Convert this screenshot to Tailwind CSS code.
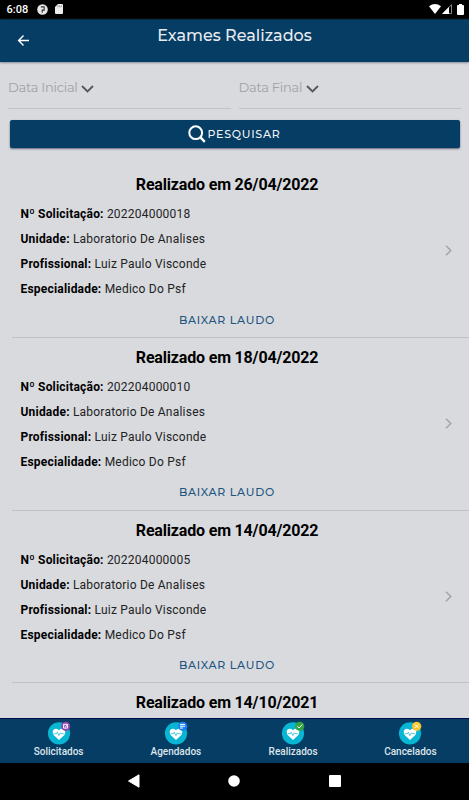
<!DOCTYPE html>
<html lang="pt-BR">
<head>
    <meta charset="UTF-8">
    <meta name="viewport" content="width=device-width, initial-scale=1.0">
    <title>Exames Realizados</title>
    <script src="https://cdn.jsdelivr.net/npm/@tailwindcss/browser@4"></script>
</head>
<body class="bg-black font-['Roboto',sans-serif]">
<div class="flex flex-col w-[469px] h-[800px] overflow-hidden bg-[#d8dade]">
    <!-- Status bar -->
    <div class="flex items-center h-[18.5px] shrink-0 bg-black text-white pl-[6.5px] pr-[5px]">
        <span class="text-[11px] font-medium leading-none w-[30px]">6:08</span>
        <svg class="w-[11px] h-[11px]" viewBox="0 0 11 11"><circle cx="5.5" cy="5.5" r="5.3" fill="#e8e8e8"/><path d="M3.8 2.9h3.4v3.2H5.2v2.7" fill="none" stroke="#333" stroke-width="1.1"/></svg>
        <svg class="w-[8px] h-[10px] ml-[7px]" viewBox="0 0 8 10"><path d="M3 0h4q1 0 1 1v8q0 1-1 1H1q-1 0-1-1V3z" fill="#eee"/><path d="M3 1.5v1.7M4.7 1.5v1.7M6.3 1.5v1.7" stroke="#777" stroke-width=".8"/></svg>
        <div class="flex items-center ml-auto">
            <svg class="w-[12px] h-[10px]" viewBox="0 0 12 10"><path d="M0 2.2Q6-2 12 2.2L6 10z" fill="#fff"/></svg>
            <svg class="w-[10px] h-[10px] ml-px" viewBox="0 0 10 10"><path d="M9.5.7v8.8H.8z" fill="none" stroke="#aaa" stroke-width=".8"/><path d="M0 10L7 3v7z" fill="#fff"/></svg>
            <svg class="w-[7px] h-[11px] ml-[5px]" viewBox="0 0 7 11"><path d="M2 0h3v1h1q1 0 1 1v8q0 1-1 1H1q-1 0-1-1V2q0-1 1-1h1z" fill="#fff"/></svg>
        </div>
    </div>

    <!-- Header -->
    <header class="flex h-[43.5px] shrink-0 bg-[#053d64] text-[#e8ebf0] border-t border-[#042c4b] shadow-[0_1px_2px_#8a8a98]">
        <div class="w-[60px] pl-[17px] pt-[14px]">
            <svg class="w-[13px] h-[13px]" viewBox="0 0 13 13" fill="none" stroke="#fff" stroke-width="1.4"><path d="M12 6.5H1.8M6.5 1.6L1.6 6.5l4.9 4.9"/></svg>
        </div>
        <h1 class="flex-1 pt-[4px] text-center text-[16px] leading-[24px] font-medium font-['Montserrat','Inter',sans-serif]">Exames Realizados</h1>
        <div class="w-[60px]"></div>
    </header>

    <main class="flex-1 min-h-0 overflow-hidden">
        <div class="flex gap-[8px] px-[8px] pt-[8px] font-['Montserrat','Inter',sans-serif] text-[13px] text-[#a0a2a5] font-normal">
            <div class="flex-1 flex items-center h-[38.5px] pb-[2px] border-b border-[#c0c2c6]">
                <span class="w-[73px] whitespace-nowrap tracking-[-0.25px]">Data Inicial</span>
                <svg class="w-[13px] h-[8px] mt-[2px]" viewBox="0 0 13 8" fill="none" stroke="#55575a" stroke-width="1.8"><path d="M1 1l5.5 5.5L12 1"/></svg>
            </div>
            <div class="flex-1 flex items-center h-[38.5px] pb-[2px] border-b border-[#c0c2c6]">
                <span class="w-[67px] whitespace-nowrap tracking-[-0.25px]">Data Final</span>
                <svg class="w-[13px] h-[8px] mt-[2px]" viewBox="0 0 13 8" fill="none" stroke="#55575a" stroke-width="1.8"><path d="M1 1l5.5 5.5L12 1"/></svg>
            </div>
        </div>

        <button class="flex items-center justify-center w-[450px] h-[27.5px] mt-[11.5px] ml-[9.5px] rounded-[2px] bg-[#053d64] text-[#f4f5f7] shadow-[0_1px_2px_#62647a]">
            <svg class="w-[18px] h-[18px]" viewBox="0 0 18 18" fill="none" stroke="#fff" stroke-width="2"><circle cx="7.7" cy="7.7" r="6.4"/><path d="M12.2 12.2l4.6 4.6" stroke-width="2.4"/></svg>
            <span class="ml-px text-[11px] font-medium tracking-[0.75px] font-['Montserrat','Inter',sans-serif]">PESQUISAR</span>
        </button>

        <div id="lista" class="pt-[17.8px]"></div>
    </main>

    <!-- Tabs -->
    <nav id="abas" class="grid grid-cols-4 h-[45px] shrink-0 bg-[#053d64] border-t border-[#00094c]"></nav>

    <!-- Android navigation -->
    <div class="flex items-center justify-center h-[37px] shrink-0 bg-black gap-[88.5px] pb-[1px] pr-[1px]">
        <svg class="w-[12px] h-[14px]" viewBox="0 0 12 14"><path d="M.5 7L11 .8v12.4z" fill="#fff" stroke="#fff" stroke-linejoin="round"/></svg>
        <svg class="w-[12px] h-[12px]" viewBox="0 0 12 12"><circle cx="6" cy="6" r="5.8" fill="#fff"/></svg>
        <svg class="w-[12px] h-[12px]" viewBox="0 0 12 12"><rect width="12" height="12" rx="1" fill="#fff"/></svg>
    </div>
</div>

<script>
    const exames = [
        { data: "26/04/2022", numero: "202204000018" },
        { data: "18/04/2022", numero: "202204000010" },
        { data: "14/04/2022", numero: "202204000005" },
        { data: "14/10/2021" }
    ];

    const abas = [
        { nome: "Solicitados", cor: "#8e44ad", marca: "M16.6 3.3h4v3.8h-4zM17.7 5l.9.9 2-2.3" },
        { nome: "Agendados", cor: "#1683f5", marca: "M16 3.4h5M16 5.2h5M16 7h3" },
        { nome: "Realizados", cor: "#35a344", marca: "M16.4 5.3l1.7 1.7 3.2-3.5" },
        { nome: "Cancelados", cor: "#fbc52d", marca: "M16.8 3.4l3.6 3.6M20.4 3.4l-3.6 3.6" }
    ];

    function linha(rotulo, valor) {
        return `<p class="h-[25px] leading-[25px] text-[12px] tracking-[0.22px] whitespace-nowrap text-[#222]"><b class="font-bold text-black tracking-[0.2px]">${rotulo}:</b> ${valor}</p>`;
    }

    function detalhes(e) {
        return `
            <div class="flex items-center justify-between h-[100px] mt-[5px] pl-[8.5px] pr-[17px]">
                <div>
                    ${linha("Nº Solicitação", e.numero)}
                    ${linha("Unidade", "Laboratorio De Analises")}
                    ${linha("Profissional", "Luiz Paulo Visconde")}
                    ${linha("Especialidade", "Medico Do Psf")}
                </div>
                <svg class="w-[7px] h-[11px] mt-[-3px]" viewBox="0 0 7 11" fill="none" stroke="#a3a5a8" stroke-width="1.5"><path d="M1 .7l4.8 4.8L1 10.3"/></svg>
            </div>
            <div class="w-[430px] pt-[7.5px] text-center text-[11px] leading-[20px] tracking-[0.75px] text-[#205580] font-medium font-['Montserrat','Inter',sans-serif]">BAIXAR LAUDO</div>`;
    }

    document.getElementById("lista").innerHTML = exames.map(e => `
        <article class="${e.numero ? 'h-[172.67px] ml-[12px] border-b border-[#bfc1c5]' : 'ml-[12px]'}">
            <h2 class="w-[430px] pt-[8px] text-center text-[16px] leading-[24px] font-bold text-black tracking-[-0.18px]">Realizado em ${e.data}</h2>
            ${e.numero ? detalhes(e) : ""}
        </article>`).join("");

    document.getElementById("abas").innerHTML = abas.map(a => `
        <div class="flex flex-col items-center pt-[2px] text-[#dfe5eb]">
            <svg class="w-[24px] h-[24px]" viewBox="0 0 24 24">
                <circle cx="12" cy="12.3" r="11.1" fill="#08b5d2"/>
                <path d="M12 19L6.6 13.9Q4.7 11.4 6.2 9.1Q8.8 6.3 12 9.2Q15.2 6.3 17.8 9.1Q19.3 11.4 17.4 13.9z" fill="#fff"/>
                <path d="M6.8 12.7h2.6l.9-1.5 1.6 3.4 1.4-2.8.7.9h2.8" fill="none" stroke="#08b5d2" stroke-width=".7"/>
                <circle cx="18.7" cy="5.3" r="4.6" fill="${a.cor}"/>
                <path d="${a.marca}" fill="none" stroke="#fff" stroke-width="1"/>
            </svg>
            <span class="mt-[1px] text-[10px] leading-[12px] font-medium">${a.nome}</span>
        </div>`).join("");
</script>
</body>
</html>
